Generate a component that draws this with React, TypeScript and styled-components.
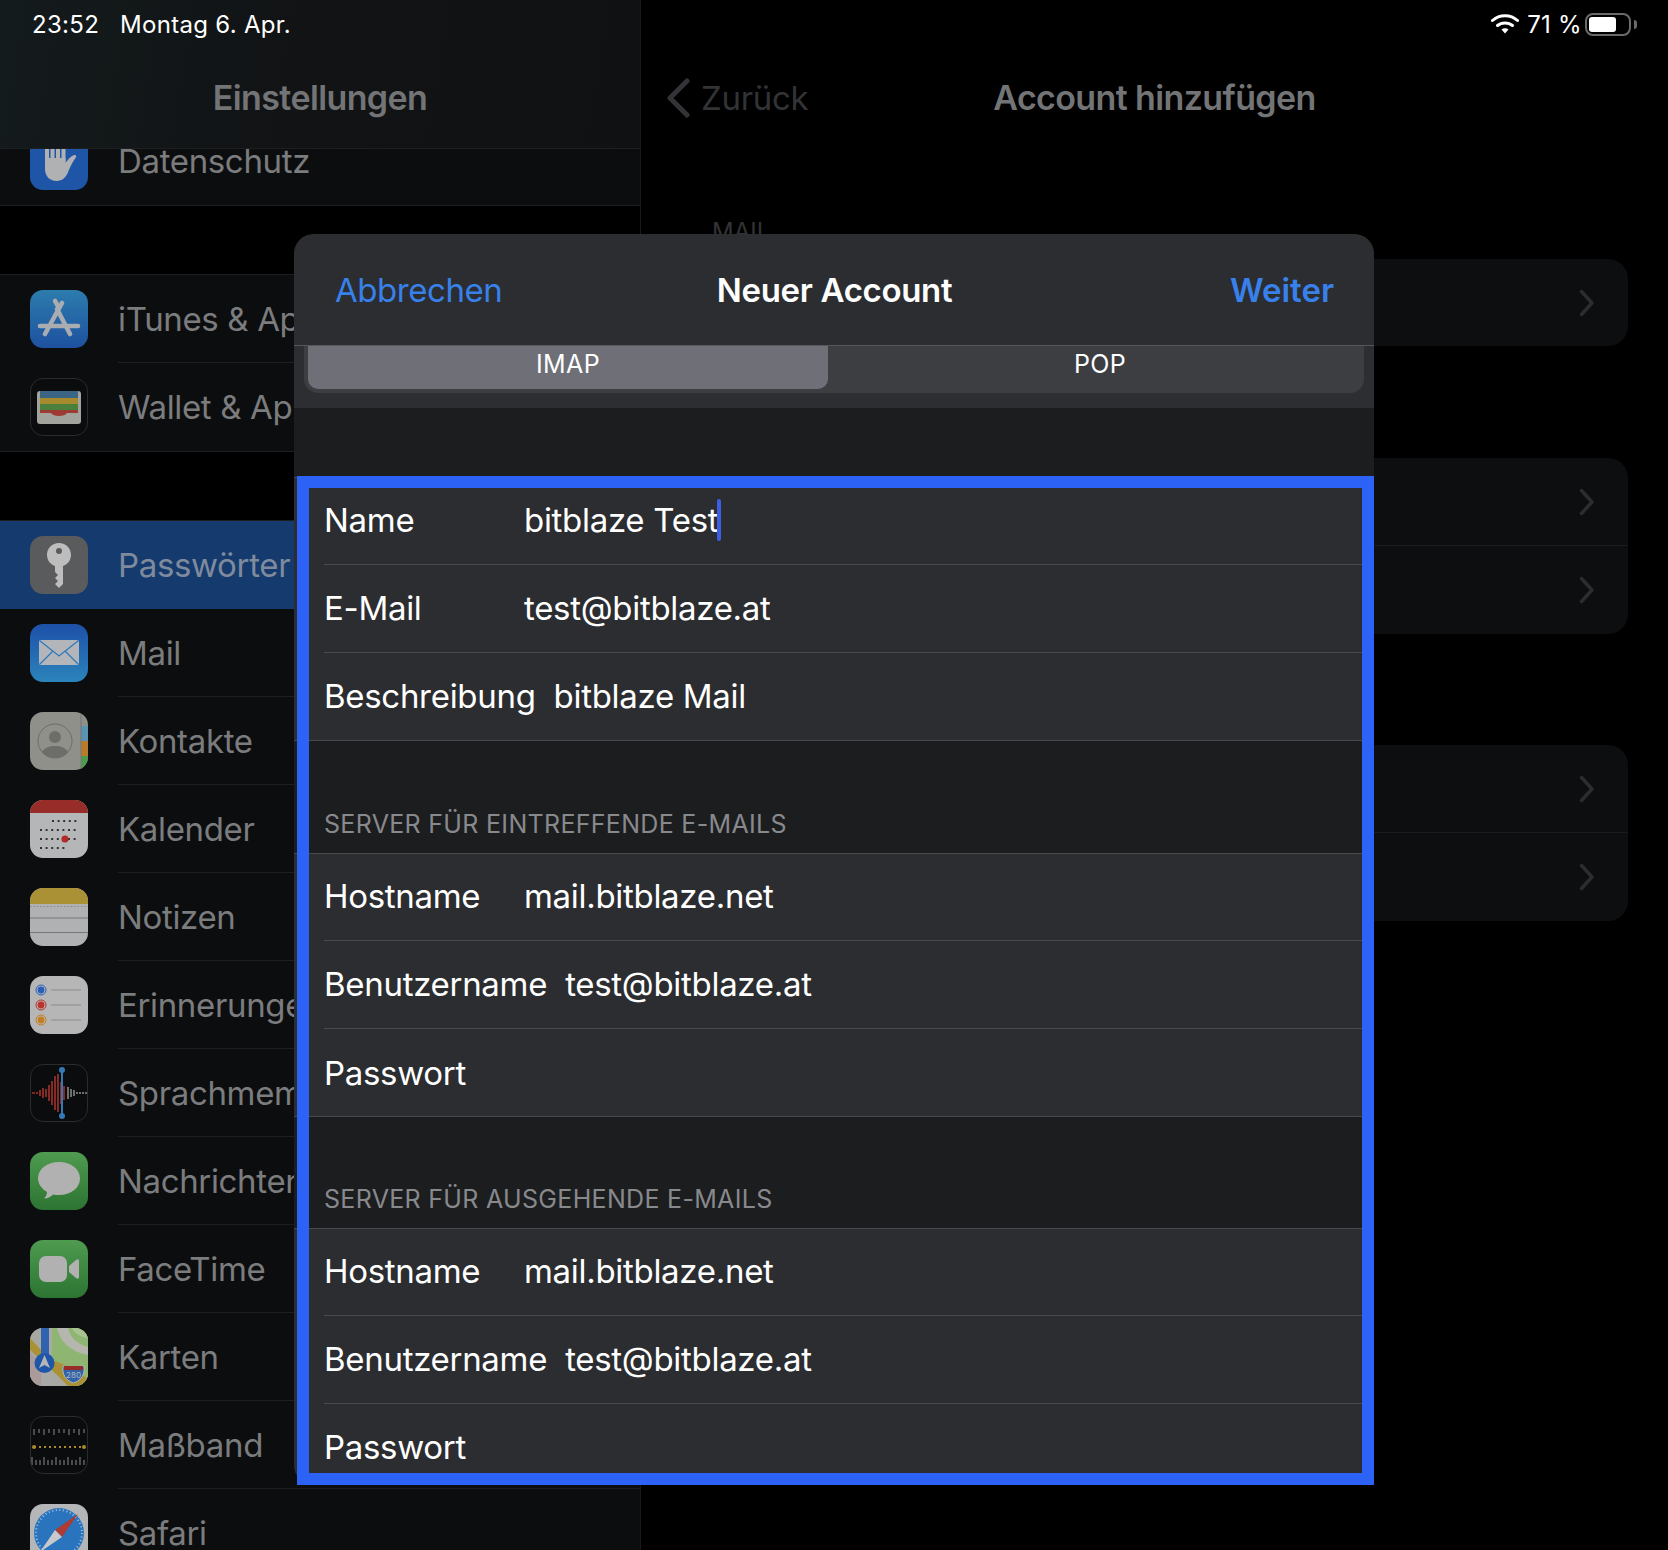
import React from "react";
import styled, { createGlobalStyle } from "styled-components";

const Global = createGlobalStyle`
  html, body { margin: 0; padding: 0; background: #000; }
  body { font-family: Inter, "Noto Sans", "Liberation Sans", sans-serif; }
`;

const Screen = styled.div`
  position: relative;
  width: 1668px;
  height: 1550px;
  overflow: hidden;
  display: flex;
  background: #000;
`;

const StatusBar = styled.div`
  position: absolute;
  top: 0;
  left: 0;
  right: 0;
  height: 48px;
  padding: 0 31px 0 32px;
  display: flex;
  align-items: center;
  justify-content: space-between;
  color: #fff;
  font-size: 24px;
  letter-spacing: 0.3px;
  z-index: 3;
`;
const StatusGroup = styled.div<{ $gap: number }>`
  display: flex;
  align-items: center;
  gap: ${(p) => p.$gap}px;
`;
const BatteryBody = styled.div`
  width: 46px;
  height: 23px;
  margin-left: -5px;
  box-sizing: border-box;
  border: 2px solid #6a6a6c;
  border-radius: 8px;
  padding: 2px;
  display: flex;
`;
const BatteryFill = styled.div`
  background: #fff;
  border-radius: 3px;
`;
const BatteryNub = styled.div`
  width: 3px;
  height: 9px;
  background: #6a6a6c;
  border-radius: 0 3px 3px 0;
  margin-left: -5px;
`;

const Sidebar = styled.aside`
  width: 641px;
  flex: none;
  box-sizing: border-box;
  border-right: 1px solid #18191a;
  display: flex;
  flex-direction: column;
  overflow: hidden;
`;
const SidebarHeader = styled.header`
  height: 149px;
  flex: none;
  box-sizing: border-box;
  background: linear-gradient(100deg, #141b1c 0%, #111315 45%, #101113 100%);
  border-bottom: 1px solid #1e1f21;
  display: flex;
  align-items: center;
  justify-content: center;
  padding-top: 47px;
  position: relative;
  z-index: 1;
`;
const NavTitle = styled.div`
  color: #737476;
  font-size: 34px;
  font-weight: 600;
  letter-spacing: -0.62px;
`;
const SidebarList = styled.div`
  flex: 1;
  overflow: hidden;
  margin-top: -32px;
`;
const Group = styled.section<{ $gap: number }>`
  margin-bottom: ${(p) => p.$gap}px;
  background: #0c0d0f;
  box-shadow: 0 -1px 0 #1d1e20, 0 1px 0 #1d1e20;
`;
const Row = styled.div<{ $active?: boolean }>`
  height: 88px;
  display: flex;
  align-items: center;
  gap: 31px;
  padding-left: 30px;
  background: ${(p) => (p.$active ? "#143a6e" : "transparent")};
`;
const RowBody = styled.div<{ $line?: boolean; $active?: boolean }>`
  flex: 1;
  height: 100%;
  display: flex;
  align-items: center;
  margin-left: -1px;
  color: ${(p) => (p.$active ? "#7f8b9c" : "#7b7c7d")};
  font-size: 33px;
  letter-spacing: -0.35px;
  white-space: nowrap;
  box-sizing: border-box;
  border-bottom: ${(p) => (p.$line ? "1px solid #1d1e20" : "none")};
`;
const Tile = styled.div<{ $bg: string; $edge?: string }>`
  width: 58px;
  height: 58px;
  flex: none;
  border-radius: 13px;
  overflow: hidden;
  box-sizing: border-box;
  background: ${(p) => p.$bg};
  border: ${(p) => (p.$edge ? `1px solid ${p.$edge}` : "none")};
  svg {
    display: block;
    width: 100%;
    height: 100%;
  }
`;

const Detail = styled.main`
  flex: 1;
  display: flex;
  flex-direction: column;
  padding: 0 40px 0 39px;
`;
const DetailHeader = styled.header`
  height: 148px;
  flex: none;
  box-sizing: border-box;
  padding-top: 47px;
  display: flex;
  align-items: center;
  position: relative;
  justify-content: center;
  margin-right: -40px;
  margin-left: -39px;
`;
const BackLink = styled.div`
  position: absolute;
  left: 24px;
  top: 76px;
  display: flex;
  align-items: center;
  gap: 10px;
  color: #323336;
  font-size: 33px;
  letter-spacing: -0.3px;
  line-height: 44px;
`;
const SectionCaption = styled.div`
  margin: 69px 0 0 32px;
  height: 42px;
  color: #333335;
  font-size: 24px;
`;
const Card = styled.section<{ $gap: number }>`
  margin-bottom: ${(p) => p.$gap}px;
  background: #0d0e0f;
  border-radius: 20px;
  overflow: hidden;
`;
const CardRow = styled.div<{ $line?: boolean }>`
  height: 88px;
  display: flex;
  align-items: center;
  justify-content: flex-end;
  padding-right: 33px;
  box-sizing: border-box;
  border-bottom: ${(p) => (p.$line ? "1px solid #1a1b1c" : "none")};
  color: #2c2d2f;
  &:only-child {
    height: 87px;
  }
`;

const Modal = styled.div`
  position: absolute;
  left: 294px;
  top: 234px;
  width: 1080px;
  height: 1251px;
  border-radius: 20px;
  overflow: hidden;
  background: #1c1d1f;
  z-index: 2;
`;
const ModalNav = styled.header`
  height: 112px;
  box-sizing: border-box;
  padding: 0 40px 0 41px;
  background: #2c2d30;
  border-bottom: 1px solid #56575a;
  display: grid;
  grid-template-columns: 1fr auto 1fr;
  align-items: center;
  font-size: 33px;
`;
const NavAction = styled.div<{ $strong?: boolean }>`
  color: #3880ea;
  font-weight: ${(p) => (p.$strong ? 600 : 400)};
  letter-spacing: ${(p) => (p.$strong ? "0" : "-0.45px")};
  text-align: ${(p) => (p.$strong ? "right" : "left")};
`;
const ModalTitle = styled.div`
  color: #fff;
  font-weight: 600;
  letter-spacing: -0.33px;
`;
const SegmentBand = styled.div`
  height: 62px;
  box-sizing: border-box;
  background: #2d2e31;
  padding: 0 10px 15px;
`;
const SegmentTrack = styled.div`
  display: grid;
  grid-template-columns: 1fr 1fr;
  gap: 12px;
  padding: 0 4px 4px;
  background: #3d3e42;
  border-radius: 0 0 14px 14px;
`;
const Segment = styled.div<{ $on?: boolean }>`
  height: 43px;
  box-sizing: border-box;
  padding-bottom: 7px;
  display: flex;
  align-items: center;
  justify-content: center;
  color: #fff;
  font-size: 25px;
  letter-spacing: 0.4px;
  background: ${(p) => (p.$on ? "#6f7077" : "transparent")};
  border-radius: 0 0 10px 10px;
`;
const Band = styled.div<{ $h: number }>`
  height: ${(p) => p.$h}px;
  box-sizing: border-box;
  background: #1c1d1f;
  padding: 0 30px 14px;
  display: flex;
  align-items: flex-end;
  color: #88898d;
  font-size: 25px;
  letter-spacing: 0.31px;
`;
const Fields = styled.section`
  background: #2c2d30;
  border-top: 1px solid #48494c;
  border-bottom: 1px solid #48494c;
  padding-left: 30px;
`;
const FieldRow = styled.div<{ $last?: boolean; $raised?: boolean }>`
  height: 88px;
  box-sizing: border-box;
  display: flex;
  align-items: center;
  gap: 18px;
  padding-bottom: ${(p) => (p.$raised ? 2 : 0)}px;
  color: #fff;
  font-size: 33px;
  letter-spacing: -0.3px;
  white-space: nowrap;
  border-bottom: ${(p) => (p.$last ? "none" : "1px solid #48494c")};
  &:first-child,
  &:last-child {
    height: 87px;
  }
`;
const FieldLabel = styled.div`
  min-width: 182px;
`;
const FieldValue = styled.div`
  display: flex;
  align-items: center;
`;
const Caret = styled.span`
  width: 4px;
  height: 42px;
  margin-left: -1px;
  background: #3a5fe6;
  border-radius: 2px;
`;
const Frame = styled.div`
  position: absolute;
  left: 297px;
  top: 476px;
  width: 1077px;
  height: 1009px;
  box-sizing: border-box;
  border: 12px solid #2c62f6;
  pointer-events: none;
  z-index: 3;
`;

const Chevron = () => (
  <svg width="16" height="28" viewBox="0 0 16 28" fill="none">
    <path d="M2.5 2.5 13 14 2.5 25.5" stroke="currentColor" strokeWidth="3.4" strokeLinecap="round" strokeLinejoin="round" />
  </svg>
);

const v = { width: "100%", height: "100%" };
const Hand = (
  <svg viewBox="0 0 58 58" style={v}>
    <g fill="#b0b1b3">
      <rect x="15" y="4" width="4" height="30" rx="2" />
      <rect x="20.500" y="2" width="4" height="30" rx="2" />
      <rect x="26" y="2" width="4" height="30" rx="2" />
      <rect x="31.500" y="3" width="4" height="30" rx="2" />
      <path d="M15 26h20.500v5c2-3 5-7 9-8 2 0 2 1 1 3-3 4-5 8-7 13-2 6-6 10-12 10-7 0-11.500-5-11.500-12z" />
    </g>
  </svg>
);
const AppStore = (
  <svg viewBox="0 0 58 58" style={v}>
    <g stroke="#a9acb0" strokeWidth="4.600" strokeLinecap="round" fill="none">
      <path d="M15 44l17-31M40 44 27 19M25 11l3 5M10 36h38" />
    </g>
  </svg>
);
const Wallet = (
  <svg viewBox="0 0 56 56" style={v}>
    <rect x="6" y="12" width="44" height="33" rx="3" fill="#a3a39e" />
    <rect x="9" y="12" width="38" height="7" fill="#3b6584" />
    <rect x="9" y="19" width="38" height="6" fill="#a68a2e" />
    <rect x="9" y="25" width="38" height="6" fill="#4b803c" />
    <path d="M9 31h38v3H36c-2 4-14 4-16 0H9z" fill="#9c3a33" />
  </svg>
);
const Key = (
  <svg viewBox="0 0 58 58" style={v}>
    <path
      fillRule="evenodd"
      fill="#bdbdbd"
      d="M29 7c7 0 12 5 12 12 0 5-3 9-8 11v18l-4 4-4-4 3-3-3-3 3-3-3-3v-6c-5-2-8-6-8-11C17 12 22 7 29 7zm0 5a3 3 0 1 0 0 6 3 3 0 0 0 0-6z"
    />
  </svg>
);
const MailIcon = (
  <svg viewBox="0 0 58 58" style={v}>
    <rect x="9" y="16" width="40" height="25" rx="1.5" fill="#b2b5b9" />
    <path d="M9.500 16.500 29 32l19.500-15.500M9.500 40.500l13-13M48.500 40.500l-13-13" stroke="#2f78b8" strokeWidth="1.2" fill="none" />
  </svg>
);
const Contacts = (
  <svg viewBox="0 0 58 58" style={v}>
    <rect x="51" y="14" width="7" height="15" fill="#5b93b3" />
    <rect x="51" y="29" width="7" height="15" fill="#b87b2c" />
    <rect x="51" y="44" width="7" height="14" fill="#4e9a4e" />
    <circle cx="25" cy="29" r="17" fill="none" stroke="#6d6d6a" strokeWidth="1" />
    <circle cx="25" cy="25" r="6" fill="#6d6d6a" />
    <path d="M12 40c3-5 8-6 13-6s10 1 13 6c-3 4-8 6-13 6s-10-2-13-6z" fill="#6d6d6a" />
    <rect x="50.500" y="0" width="1" height="58" fill="#777" />
  </svg>
);
const Calendar = (
  <svg viewBox="0 0 58 58" style={v}>
    <rect width="58" height="13" fill="#982c28" />
    <path d="M22 21h26M10 30h38M10 39h36M10 48h26" stroke="#333" strokeWidth="2" strokeDasharray="2 3.6" />
    <circle cx="35" cy="39" r="3.6" fill="#b32a27" />
  </svg>
);
const Notes = (
  <svg viewBox="0 0 58 58" style={v}>
    <rect width="58" height="16" fill="#ab9135" />
    <path d="M0 18.500h58" stroke="#888" strokeWidth="1" strokeDasharray="1.4 2" />
    <path d="M0 30h58M0 44.500h58" stroke="#777" strokeWidth="1" />
  </svg>
);
const Reminders = (
  <svg viewBox="0 0 58 58" style={v}>
    {[["#2a5fb8", 14], ["#b8342f", 29], ["#c27f22", 44]].map(([c, y]) => (
      <g key={String(c)}>
        <circle cx="11" cy={y as number} r="5" fill="none" stroke={c as string} strokeWidth="1" />
        <circle cx="11" cy={y as number} r="3.4" fill={c as string} />
        <path d={`M21 ${y}h30`} stroke="#8b8b8b" strokeWidth="1" />
      </g>
    ))}
  </svg>
);
const Voice = (
  <svg viewBox="0 0 56 56" style={v}>
    <path
      d="M1 28h3M6 27v2M9 25v6M12 23v10M15 24v8M18 20v16M21 16v24M24 11v34M27 9v38M30 17v22M33 21v14"
      stroke="#a5322c"
      strokeWidth="1.6"
    />
    <path d="M37 22v12M40 24v8M43 25v6M46 27v2M49 27v2M52 27v2M55 27v2" stroke="#9a9a9a" strokeWidth="1.4" />
    <path d="M31 5v46" stroke="#3479b5" strokeWidth="2" />
    <circle cx="31" cy="5" r="3" fill="#3479b5" />
    <circle cx="31" cy="51" r="3" fill="#3479b5" />
  </svg>
);
const Messages = (
  <svg viewBox="0 0 58 58" style={v}>
    <path
      d="M29 10c12 0 21 7 21 16.500S41 43 29 43c-2 0-4 0-6-.6-2 2-5 4-9 4 2-2 3-4 3-6.400C12 37 8 32 8 26.500 8 17 17 10 29 10z"
      fill="#b0b1b0"
    />
  </svg>
);
const FaceTime = (
  <svg viewBox="0 0 58 58" style={v}>
    <rect x="9" y="16" width="28" height="26" rx="7" fill="#b0b1b0" />
    <path d="M39 26l7-6c1-1 3-1 3 1v16c0 2-2 2-3 1l-7-6z" fill="#b0b1b0" />
  </svg>
);
const Maps = (
  <svg viewBox="0 0 58 58" style={v}>
    <rect width="58" height="58" fill="#a8a8a3" />
    <path d="M22 0h36v58H40c-2-8-10-12-18-14z" fill="#8fb573" />
    <path d="M27 0c3 14 14 24 31 27v-8C47 16 40 9 38 0z" fill="#b5b6ae" />
    <path d="M42 0c2 5 8 9 16 10V0z" fill="#a8c38f" />
    <path d="M0 10l11 12v10L0 22z" fill="#ab9135" />
    <path d="M22 32l18 7 18 12v7H38L22 42z" fill="#ab9135" />
    <path d="M0 24l11 12v22H5c-3 0-5-2-5-5z" fill="#ab9a9a" />
    <rect x="11" y="0" width="11" height="58" fill="#a9aaa8" />
    <rect x="11" y="0" width="8" height="28" fill="#2f63ad" />
    <circle cx="14.500" cy="35" r="10" fill="#1f56a8" />
    <path d="M14.500 27l5.500 13-5.500-3-5.500 3z" fill="#b5b6b8" />
    <path d="M33 38c6 1 15 1 21 0 1 8-2 14-10.500 17C35 52 32 46 33 38z" fill="#2f63ad" stroke="#b5b6b8" strokeWidth="1" />
    <rect x="34" y="38" width="19" height="4" fill="#982c28" />
    <text x="43.500" y="49.500" textAnchor="middle" fill="#b5b6b8" fontSize="8" fontFamily="Inter, sans-serif">
      280
    </text>
  </svg>
);
const Measure = (
  <svg viewBox="0 0 56 56" style={v}>
    <path d="M3 12v6M8 12v4M13 12v6M18 12v4M23 12v6M33 12v4M28 12v4M38 12v6M43 12v4M48 12v6M53 12v4" stroke="#8a8a8a" strokeWidth="1" />
    <path d="M3 30h50" stroke="#ab8a2c" strokeWidth="2" strokeDasharray="2 3" />
    <circle cx="3" cy="30" r="2" fill="#ab8a2c" />
    <circle cx="53" cy="30" r="2" fill="#ab8a2c" />
    <path d="M1 40v8M5 43v5M9 43v5M13 40v8M17 43v5M21 43v5M25 40v8M29 43v5M33 43v5M37 40v8M41 43v5M45 43v5M49 40v8M53 43v5" stroke="#8a8a8a" strokeWidth="1" />
  </svg>
);
const SafariIcon = (
  <svg viewBox="0 0 58 58" style={v}>
    <circle cx="29" cy="29" r="25" fill="#2a74bd" />
    <circle cx="29" cy="29" r="23" fill="none" stroke="#9fc0dc" strokeWidth="2" strokeDasharray="1 2.600" />
    <path d="M48 10 32 33 25 26z" fill="#ad3a33" />
    <path d="M10 48l22-15-7-7z" fill="#c8c9cc" />
  </svg>
);

type Item = { name: string; bg: string; edge?: string; art: React.ReactNode; active?: boolean };

const groupOne: Item[] = [{ name: "Datenschutz", bg: "#1e55a6", art: Hand }];
const groupTwo: Item[] = [
  { name: "iTunes & App Store", bg: "linear-gradient(#2c7cad,#1e51a0)", art: AppStore },
  { name: "Wallet & Apple Pay", bg: "#0b0c0d", edge: "#2a2b2d", art: Wallet },
];
const groupThree: Item[] = [
  { name: "Passwörter", bg: "#5a5b5c", art: Key, active: true },
  { name: "Mail", bg: "linear-gradient(#1d50a8,#2b84bb)", art: MailIcon },
  { name: "Kontakte", bg: "#8f908a", art: Contacts },
  { name: "Kalender", bg: "#b5b6b8", art: Calendar },
  { name: "Notizen", bg: "#b0b1b2", art: Notes },
  { name: "Erinnerungen", bg: "#b6b6b7", art: Reminders },
  { name: "Sprachmemos", bg: "#0b0c0d", edge: "#2a2b2d", art: Voice },
  { name: "Nachrichten", bg: "linear-gradient(#4f9b50,#2c7432)", art: Messages },
  { name: "FaceTime", bg: "linear-gradient(#4f9b50,#2c7432)", art: FaceTime },
  { name: "Karten", bg: "#a8a8a3", art: Maps },
  { name: "Maßband", bg: "#0b0c0d", edge: "#2a2b2d", art: Measure },
  { name: "Safari", bg: "#b5b6b8", art: SafariIcon },
];

const SideGroup = ({ items, gap }: { items: Item[]; gap: number }) => (
  <Group $gap={gap}>
    {items.map((it, i) => {
      const nextActive = items[i + 1]?.active;
      const line = i < items.length - 1 && !it.active && !nextActive;
      return (
        <Row key={it.name} $active={it.active}>
          <Tile $bg={it.bg} $edge={it.edge}>
            {it.art}
          </Tile>
          <RowBody $line={line} $active={it.active}>
            {it.name}
          </RowBody>
        </Row>
      );
    })}
  </Group>
);

const Field = ({ label, value, last, caret }: { label: string; value?: string; last?: boolean; caret?: boolean }) => (
  <FieldRow $last={last} $raised={Boolean(value)}>
    <FieldLabel>{label}</FieldLabel>
    {value && (
      <FieldValue>
        {value}
        {caret && <Caret />}
      </FieldValue>
    )}
  </FieldRow>
);

export default function App() {
  return (
    <Screen>
      <Global />
      <StatusBar>
        <StatusGroup $gap={21}>
          <span>23:52</span>
          <span>Montag 6. Apr.</span>
        </StatusGroup>
        <StatusGroup $gap={8}>
          <svg width="28" height="22" viewBox="0 0 28 22" fill="none">
            <path d="M1.500 7.500C8.500 1 19.500 1 26.500 7.500" stroke="#fff" strokeWidth="3" strokeLinecap="round" />
            <path d="M6.500 12.500c4-3.500 11-3.500 15 0" stroke="#fff" strokeWidth="3" strokeLinecap="round" />
            <path d="M10.500 16.500 14 20.500l3.500-4c-2-1.700-5-1.700-7 0z" fill="#fff" />
          </svg>
          <span>71 %</span>
          <BatteryBody>
            <BatteryFill style={{ width: "71%" }} />
          </BatteryBody>
          <BatteryNub />
        </StatusGroup>
      </StatusBar>

      <Sidebar>
        <SidebarHeader>
          <NavTitle>Einstellungen</NavTitle>
        </SidebarHeader>
        <SidebarList>
          <SideGroup items={groupOne} gap={70} />
          <SideGroup items={groupTwo} gap={70} />
          <SideGroup items={groupThree} gap={0} />
        </SidebarList>
      </Sidebar>

      <Detail>
        <DetailHeader>
          <BackLink>
            <svg width="26" height="40" viewBox="0 0 26 40" fill="none">
              <path d="M22 3 5 20l17 17" stroke="#323336" strokeWidth="5" strokeLinecap="round" strokeLinejoin="round" />
            </svg>
            Zurück
          </BackLink>
          <NavTitle>Account hinzufügen</NavTitle>
        </DetailHeader>
        <SectionCaption>MAIL</SectionCaption>
        <Card $gap={112}>
          <CardRow>
            <Chevron />
          </CardRow>
        </Card>
        <Card $gap={111}>
          <CardRow $line>
            <Chevron />
          </CardRow>
          <CardRow>
            <Chevron />
          </CardRow>
        </Card>
        <Card $gap={0}>
          <CardRow $line>
            <Chevron />
          </CardRow>
          <CardRow>
            <Chevron />
          </CardRow>
        </Card>
      </Detail>

      <Modal>
        <ModalNav>
          <NavAction>Abbrechen</NavAction>
          <ModalTitle>Neuer Account</ModalTitle>
          <NavAction $strong>Weiter</NavAction>
        </ModalNav>
        <SegmentBand>
          <SegmentTrack>
            <Segment $on>IMAP</Segment>
            <Segment>POP</Segment>
          </SegmentTrack>
        </SegmentBand>
        <Band $h={69} />
        <Fields>
          <Field label="Name" value="bitblaze Test" caret />
          <Field label="E-Mail" value="test@bitblaze.at" />
          <Field label="Beschreibung" value="bitblaze Mail" last />
        </Fields>
        <Band $h={112}>SERVER FÜR EINTREFFENDE E-MAILS</Band>
        <Fields>
          <Field label="Hostname" value="mail.bitblaze.net" />
          <Field label="Benutzername" value="test@bitblaze.at" />
          <Field label="Passwort" last />
        </Fields>
        <Band $h={111}>SERVER FÜR AUSGEHENDE E-MAILS</Band>
        <Fields>
          <Field label="Hostname" value="mail.bitblaze.net" />
          <Field label="Benutzername" value="test@bitblaze.at" />
          <Field label="Passwort" />
        </Fields>
      </Modal>
      <Frame />
    </Screen>
  );
}
